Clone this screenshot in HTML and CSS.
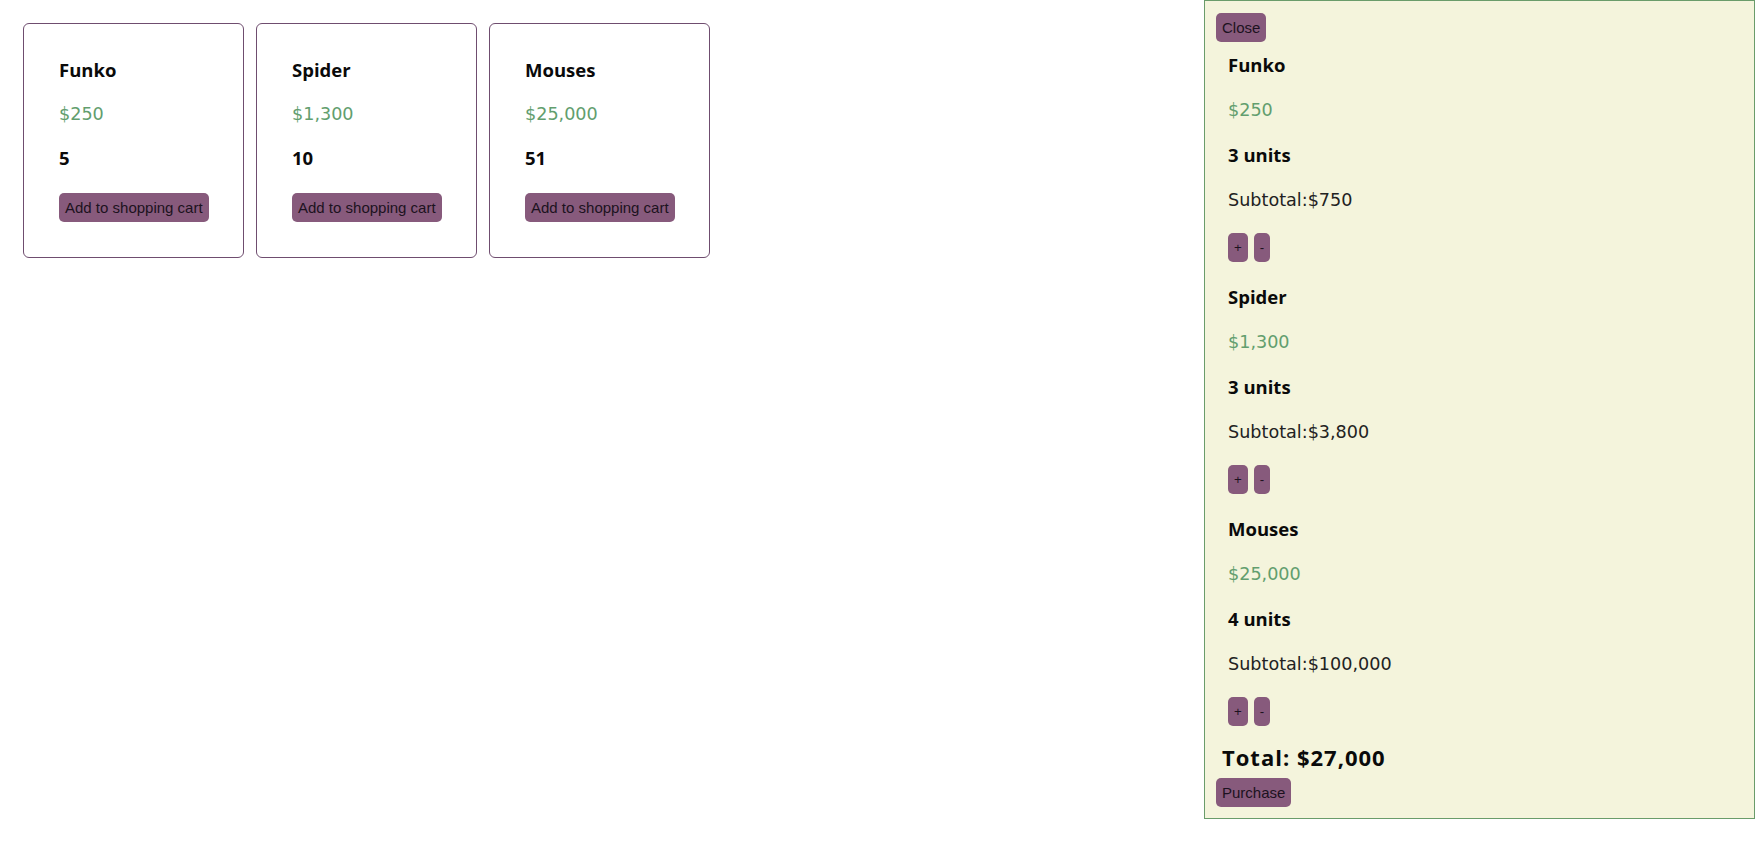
FILE: index.html
```html
<!DOCTYPE html>
<html lang="en">
<head>
<meta charset="utf-8">
<title>Shop</title>
<link rel="stylesheet" href="styles.css">
</head>
<body>
<main class="shop">
  <div class="card">
    <div class="name">Funko</div>
    <div class="price">$250</div>
    <div class="stock">5</div>
    <button class="btn add">Add to shopping cart</button>
  </div>
  <div class="card">
    <div class="name">Spider</div>
    <div class="price">$1,300</div>
    <div class="stock">10</div>
    <button class="btn add">Add to shopping cart</button>
  </div>
  <div class="card">
    <div class="name">Mouses</div>
    <div class="price">$25,000</div>
    <div class="stock">51</div>
    <button class="btn add">Add to shopping cart</button>
  </div>
</main>

<aside class="cart">
  <button class="btn close">Close</button>
  <div class="cart-list">
    <div class="cart-item">
      <div class="name">Funko</div>
      <div class="price">$250</div>
      <div class="stock">3 units</div>
      <div class="subtotal">Subtotal:$750</div>
      <div class="qty"><button class="btn small">+</button><button class="btn small">-</button></div>
    </div>
    <div class="cart-item">
      <div class="name">Spider</div>
      <div class="price">$1,300</div>
      <div class="stock">3 units</div>
      <div class="subtotal">Subtotal:$3,800</div>
      <div class="qty"><button class="btn small">+</button><button class="btn small">-</button></div>
    </div>
    <div class="cart-item">
      <div class="name">Mouses</div>
      <div class="price">$25,000</div>
      <div class="stock">4 units</div>
      <div class="subtotal">Subtotal:$100,000</div>
      <div class="qty"><button class="btn small">+</button><button class="btn small">-</button></div>
    </div>
  </div>
  <div class="total">Total: $27,000</div>
  <button class="btn purchase">Purchase</button>
</aside>
</body>
</html>
```

FILE: styles.css
```css
html, body {
  margin: 0;
  padding: 0;
  background: #ffffff;
}

body {
  font-family: "DejaVu Sans", sans-serif;
  color: #111;
}

.shop {
  display: flex;
  align-items: flex-start;
  gap: 12px;
  padding: 23px;
}

.card {
  width: 221px;
  box-sizing: border-box;
  border: 1px solid #6f4d6f;
  border-radius: 6px;
  padding: 34px 30px 35px 35px;
  display: flex;
  flex-direction: column;
  align-items: flex-start;
  gap: 20px;
}

.name,
.stock {
  font-family: "Open Sans", sans-serif;
  font-weight: 700;
  font-size: 18.5px;
  line-height: 24px;
  color: #0a0a0a;
}

.price {
  font-family: "DejaVu Sans", sans-serif;
  font-size: 17.6px;
  line-height: 24px;
  color: #629e6e;
}

.subtotal {
  font-family: "DejaVu Sans", sans-serif;
  font-size: 17.6px;
  line-height: 24px;
  color: #222;
}

.btn {
  font-family: "Liberation Sans", Arial, sans-serif;
  font-size: 15px;
  line-height: 17px;
  padding: 6px;
  border: none;
  border-radius: 5px;
  background: #875a7c;
  color: #1c1220;
  white-space: nowrap;
  cursor: pointer;
}

.card .add {
  margin-top: 3px;
}

.cart {
  position: fixed;
  top: 0;
  right: 0;
  width: 551px;
  box-sizing: border-box;
  background: #f4f4dc;
  border: 1px solid #6a9c6a;
  padding: 12px 11px 11px;
  display: flex;
  flex-direction: column;
  align-items: flex-start;
}

.cart-list {
  margin-top: 11px;
  display: flex;
  flex-direction: column;
  gap: 23px;
}

.cart-item {
  padding-left: 12px;
  display: flex;
  flex-direction: column;
  align-items: flex-start;
  gap: 21px;
}

.qty {
  display: flex;
  gap: 6px;
}

.btn.small {
  font-size: 13.33px;
  line-height: 15px;
  padding: 7px 6px;
}

.total {
  margin: 17px 0 0 6px;
  font-family: "Open Sans", sans-serif;
  font-weight: 700;
  font-size: 22px;
  letter-spacing: 1px;
  line-height: 28px;
  color: #0a0a0a;
}

.purchase {
  margin-top: 7px;
}
```
